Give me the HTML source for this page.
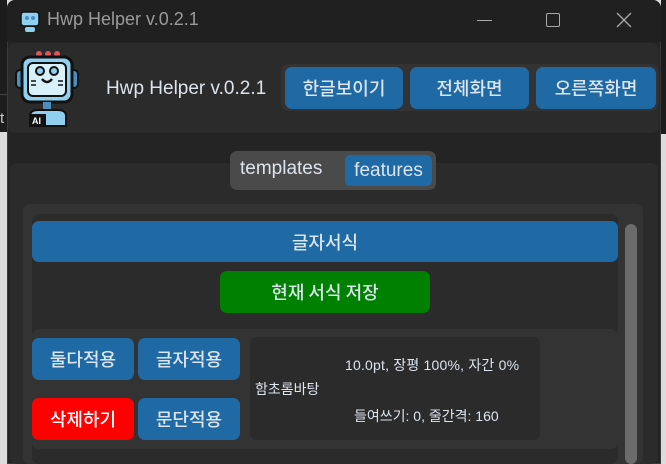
<!DOCTYPE html>
<html><head><meta charset="utf-8"><style>
*{margin:0;padding:0;box-sizing:border-box}
body{width:666px;height:464px;overflow:hidden;background:#dcdcdc;position:relative;font-family:"Liberation Sans","Noto Sans CJK KR",sans-serif}
div{position:absolute}
.b{background:#1f6aa5;color:#dce4ee;border-radius:7px;display:flex;align-items:center;justify-content:center;font-size:18px;font-weight:500;font-family:"Noto Sans CJK KR",sans-serif}
.i{color:#dce4ee;font-size:14px;font-family:"Liberation Sans","Noto Sans CJK KR",sans-serif;white-space:nowrap}
</style></head><body>
<div style="left:0;top:0;width:7px;height:132px;background:#1c1c1c"></div>
<div style="left:0;top:94px;width:7px;height:1px;background:#444"></div>
<div style="left:0;top:110px;width:7px;height:20px;color:#ccc;font-size:15px">t</div>
<div style="left:661px;top:0;width:5px;height:134px;background:#1c1c1c"></div>
<div style="left:7px;top:0;width:654px;height:464px;background:#242424;border-radius:8px 8px 0 0;border:1px solid #3a3a3a"></div>
<div style="left:7px;top:0;width:654px;height:42px;background:#202020;border-radius:8px 8px 0 0"></div>
<svg style="position:absolute;left:18px;top:10px" width="24" height="22" viewBox="0 0 24 22"><rect x="3" y="2" width="18" height="14" rx="3" fill="#8fd0f0" stroke="#111" stroke-width="1.5"/><circle cx="9" cy="8" r="2" fill="#4a8fc0"/><circle cx="15" cy="8" r="2" fill="#4a8fc0"/><rect x="7" y="17" width="10" height="5" rx="2" fill="#8fd0f0"/></svg>
<div style="left:47px;top:9px;color:#9a9a9a;font-size:18px">Hwp Helper v.0.2.1</div>
<div style="left:477px;top:20px;width:15px;height:1px;background:#aaa"></div>
<div style="left:546px;top:13px;width:14px;height:14px;border:1.5px solid #aaa;border-radius:2px"></div>
<svg style="position:absolute;left:616px;top:12px" width="16" height="16"><path d="M1 1L15 15M15 1L1 15" stroke="#aaa" stroke-width="1.3"/></svg>
<div style="left:8px;top:43px;width:651px;height:90px;background:#2b2b2b;border-radius:7px"></div>
<svg style="position:absolute;left:14px;top:48px" width="66" height="80" viewBox="0 0 66 80">
<circle cx="25" cy="6" r="3" fill="#e05555"/><circle cx="34" cy="6" r="3" fill="#e05555"/><circle cx="43" cy="6" r="3" fill="#e05555"/>
<rect x="2" y="22" width="8" height="18" rx="4" fill="#4a8fc0" stroke="#111" stroke-width="2"/><rect x="56" y="22" width="8" height="18" rx="4" fill="#4a8fc0" stroke="#111" stroke-width="2"/>
<rect x="8" y="9" width="50" height="45" rx="8" fill="#8fd0f0" stroke="#111" stroke-width="3"/>
<rect x="14" y="15" width="38" height="33" rx="5" fill="#d8f0fa" stroke="#111" stroke-width="2"/>
<circle cx="26" cy="23" r="4" fill="#8fd0f0" stroke="#111" stroke-width="2"/><circle cx="40" cy="23" r="4" fill="#8fd0f0" stroke="#111" stroke-width="2"/>
<path d="M28 31Q33 37 38 31" stroke="#111" stroke-width="2.5" fill="none"/>
<path d="M17 33h5M17 37h5M44 33h5M44 37h5" stroke="#111" stroke-width="1.5"/>
<rect x="29" y="54" width="8" height="8" fill="#4a8fc0"/>
<path d="M16 78V68Q16 62 24 62H44Q52 62 52 68V78Z" fill="#8fd0f0" stroke="#111" stroke-width="2"/>
<rect x="16" y="66" width="16" height="12" fill="#111"/><text x="18" y="76" font-size="9" font-weight="bold" fill="#fff" font-family="Liberation Sans">AI</text>
</svg>
<div style="left:106px;top:78px;color:#dce4ee;font-size:19px">Hwp Helper v.0.2.1</div>
<div style="left:281px;top:64px;width:378px;height:47px;background:#333;border-radius:8px"></div>
<div class="b" style="left:285px;top:67px;width:118px;height:42px">한글보이기</div>
<div class="b" style="left:410px;top:67px;width:119px;height:42px">전체화면</div>
<div class="b" style="left:536px;top:67px;width:120px;height:42px">오른쪽화면</div>
<div style="left:10px;top:163px;width:648px;height:301px;background:#2b2b2b;border-radius:7px"></div>
<div style="left:230px;top:151px;width:206px;height:39px;background:#4a4a4a;border-radius:7px"></div>
<div style="left:240px;top:158px;color:#dce4ee;font-size:19px">templates</div>
<div class="b" style="left:345px;top:155px;width:87px;height:31px;font-size:19px;border-radius:5px;font-family:'Liberation Sans',sans-serif;font-weight:normal">features</div>
<div style="left:23px;top:204px;width:620px;height:260px;background:#333;border-radius:7px"></div>
<div style="left:32px;top:214px;width:586px;height:250px;background:#2b2b2b;border-radius:7px"></div>
<div style="left:625px;top:224px;width:12px;height:240px;background:#6b6b6b;border-radius:6px"></div>
<div class="b" style="left:32px;top:221px;width:586px;height:41px">글자서식</div>
<div class="b" style="left:220px;top:271px;width:210px;height:42px;background:#008000">현재 서식 저장</div>
<div style="left:32px;top:329px;width:586px;height:120px;background:#333;border-radius:7px"></div>
<div class="b" style="left:32px;top:338px;width:102px;height:42px">둘다적용</div>
<div class="b" style="left:138px;top:338px;width:102px;height:42px">글자적용</div>
<div class="b" style="left:32px;top:398px;width:102px;height:42px;background:#f00;color:#fff">삭제하기</div>
<div class="b" style="left:138px;top:398px;width:102px;height:42px">문단적용</div>
<div style="left:250px;top:337px;width:290px;height:103px;background:#2b2b2b;border-radius:7px"></div>
<div class="i" style="left:345px;top:355px;letter-spacing:0.2px">10.0pt, 장평 100%, 자간 0%</div>
<div class="i" style="left:255px;top:379px">함초롬바탕</div>
<div class="i" style="left:354px;top:406px">들여쓰기: 0, 줄간격: 160</div>
</body></html>
